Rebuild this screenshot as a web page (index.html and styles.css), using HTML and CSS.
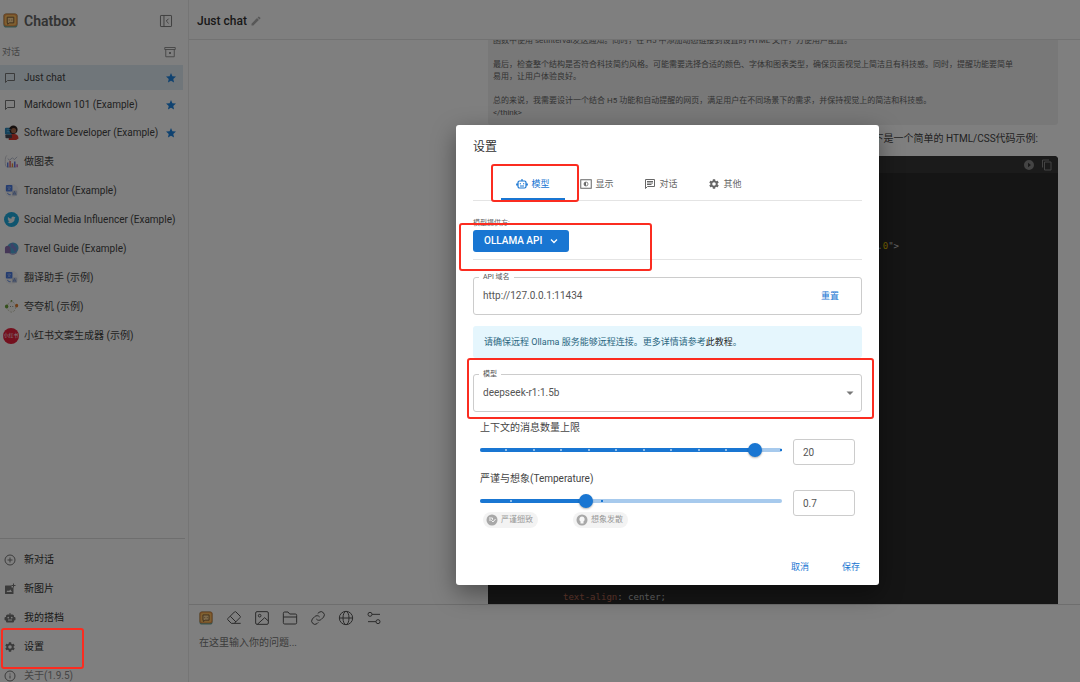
FILE: index.html
```html
<!DOCTYPE html>
<html lang="zh-CN">
<head>
<meta charset="utf-8">
<title>Chatbox</title>
<link rel="stylesheet" href="styles.css">
</head>
<body>
<svg class="defs" aria-hidden="true">
  <symbol id="logo" viewBox="0 0 16 16"><rect x=".5" y=".5" width="15" height="15" rx="3" fill="#6fa79c"/><rect x=".5" y=".5" width="15" height="13.500" rx="3" fill="#e0904a"/><rect x="2" y="2" width="12" height="11" rx="2" fill="#ffc060"/><path d="M4.500 4.500h7v6H7l-2 1.500v-1.500h-.5z" fill="#ffd898" stroke="#7a5a38" stroke-width="1"/><path d="M6.200 7.500h.8M9 7.500h.8" stroke="#7a5a38"/></symbol>
  <symbol id="bubble" viewBox="0 0 24 24"><path d="M3 3h18v14H7l-4 4z" fill="none" stroke="currentColor" stroke-width="2" stroke-linejoin="round"/></symbol>
  <symbol id="star" viewBox="0 0 24 24"><path d="M12 17.300 18.200 21l-1.640-7.030L22 9.240l-7.190-.61L12 2 9.190 8.630 2 9.240l5.460 4.730L5.820 21z" fill="currentColor"/></symbol>
  <symbol id="gear" viewBox="0 0 24 24"><path fill="currentColor" fill-rule="evenodd" d="M19.140 12.940c.04-.3.06-.61.06-.94s-.02-.64-.07-.94l2.030-1.580a.5.5 0 0 0 .12-.61l-1.920-3.320a.49.49 0 0 0-.59-.22l-2.390.96a7 7 0 0 0-1.620-.94l-.36-2.540a.48.48 0 0 0-.48-.41h-3.840a.47.47 0 0 0-.47.41l-.36 2.540c-.59.24-1.130.57-1.620.94l-2.390-.96a.47.47 0 0 0-.59.22L2.740 8.870a.47.47 0 0 0 .12.61l2.030 1.580a6 6 0 0 0-.02 1.880l-2.030 1.580a.5.5 0 0 0-.12.61l1.920 3.320c.12.22.37.29.59.22l2.390-.96c.5.38 1.030.7 1.620.94l.36 2.540c.05.24.24.41.48.41h3.840c.24 0 .44-.17.47-.41l.36-2.540a7 7 0 0 0 1.620-.94l2.390.96c.22.08.47 0 .59-.22l1.920-3.320a.47.47 0 0 0-.12-.61zM12 15.600a3.600 3.600 0 1 1 0-7.200 3.600 3.600 0 0 1 0 7.200z"/></symbol>
  <symbol id="translate" viewBox="0 0 16 16"><circle cx="8" cy="8" r="7.500" fill="#f4f4f6"/><rect x="2" y="2" width="7" height="7" rx="1" fill="#4a7ae0"/><path d="M3.500 4.500h4M5.500 3.500v1M4 7.500c1.500-.5 2.500-1.500 3-3M4.500 5.500c.5 1 1.500 1.800 2.500 2" stroke="#b8ccf8" stroke-width=".6" fill="none"/><rect x="8.500" y="8" width="5.500" height="5.500" rx="1" fill="#c4cce0"/><path d="m9.700 12.500 1.500-3.500 1.500 3.500M10.200 11.700h2" stroke="#6484c8" stroke-width=".8" fill="none"/><path d="M4 10.500c0 1.500 1 2 3 2" stroke="#4a7ae0" fill="none"/></symbol>
</svg>

<div class="app">
  <aside class="sidebar">
    <header class="brand">
      <svg class="i15"><use href="#logo"/></svg>
      <h1>Chatbox</h1>
      <button class="plain" aria-label="收起"><svg class="i14" viewBox="0 0 24 24" fill="none" stroke="currentColor" stroke-width="1.600"><rect x="2.500" y="2.500" width="19" height="19" rx="1"/><path d="M8.500 2.500v19M16.500 8l-4 4 4 4"/></svg></button>
    </header>
    <div class="section"><span>对话</span>
      <button class="plain" aria-label="清理"><svg class="i12" viewBox="0 0 24 24" fill="none" stroke="currentColor" stroke-width="1.800"><path d="M1.500 3h21v4h-21zM3.500 7v14.500h17V7M10 12l4 4m0-4-4 4"/></svg></button>
    </div>
    <nav class="chats">
      <a href="#" class="row active"><span class="ic"><svg class="i12"><use href="#bubble"/></svg></span><span class="name">Just chat</span><svg class="i12 star"><use href="#star"/></svg></a>
      <a href="#" class="row"><span class="ic"><svg class="i12"><use href="#bubble"/></svg></span><span class="name">Markdown 101 (Example)</span><svg class="i12 star"><use href="#star"/></svg></a>
      <a href="#" class="row tall"><span class="ic"><svg class="i15" viewBox="0 0 16 16"><rect x="1" y="3" width="9" height="7" rx="1" fill="#2f86b8"/><circle cx="10" cy="5" r="4.500" fill="#2d211e"/><circle cx="10.300" cy="6" r="2.700" fill="#a86a4c"/><path d="M5 16c0-5 2-6.500 5.500-6.500s5 2 5 5L13 16z" fill="#d9382c"/><rect x="1.500" y="10" width="7" height="4" rx="1" fill="#474b58"/><path d="M3 5h4M3 7h3" stroke="#5bb0dc"/></svg></span><span class="name">Software Developer (Example)</span><svg class="i12 star"><use href="#star"/></svg></a>
      <a href="#" class="row tall"><span class="ic"><svg class="i15" viewBox="0 0 16 16"><path d="M3 1.500C1.500 3 1.300 5 1.300 8s.2 5 1.700 6h10" fill="none" stroke="#c8c8d0"/><path d="m4 5 2 1.500L9 4l2 2 3-3" fill="none" stroke="#a0a8c0" stroke-width=".8"/><path d="M4 14V9" stroke="#5b7be0" stroke-width="1.500"/><path d="M6.500 14V7.500" stroke="#e05b6b" stroke-width="1.500"/><path d="M9 14v-4" stroke="#e08b3b" stroke-width="1.500"/><path d="M11.500 14V8" stroke="#5b6be0" stroke-width="1.500"/><path d="M14 14v-3" stroke="#c05bb0" stroke-width="1.500"/></svg></span><span class="name">做图表</span></a>
      <a href="#" class="row tall"><span class="ic"><svg class="i15"><use href="#translate"/></svg></span><span class="name">Translator (Example)</span></a>
      <a href="#" class="row tall"><span class="ic"><svg class="i15" viewBox="0 0 24 24"><circle cx="12" cy="12" r="12" fill="#1eaade"/><path fill="#f3f8fa" d="M18.500 8.500a5 5 0 0 1-1.500.4c.5-.3 1-.8 1.200-1.400-.5.3-1.100.5-1.700.6a2.700 2.700 0 0 0-4.600 2.500A7.600 7.600 0 0 1 6.400 7.800a2.700 2.700 0 0 0 .8 3.600c-.4 0-.9-.1-1.200-.3 0 1.300.9 2.400 2.100 2.700-.4.100-.8.1-1.200 0 .3 1.100 1.300 1.800 2.500 1.900A5.400 5.400 0 0 1 5.500 16.800a7.600 7.600 0 0 0 11.700-6.900c.5-.4 1-.9 1.300-1.400z"/></svg></span><span class="name">Social Media Influencer (Example)</span></a>
      <a href="#" class="row tall"><span class="ic"><svg class="i15" viewBox="0 0 16 16"><circle cx="9.500" cy="7.500" r="6" fill="#4fa9d6"/><path d="M8 2c3 1 2 3 4 4s2 4 0 6c-2-1-1-3-3-4S6 4 8 2z" fill="#7a86d0"/><path d="M1 13V8c0-2 1-3 3-3s3 2 3 4v4H2z" fill="#8a6faf"/><path d="M6 13c3 2 6 1 8-1" stroke="#7f78b8" fill="none"/></svg></span><span class="name">Travel Guide (Example)</span></a>
      <a href="#" class="row tall"><span class="ic"><svg class="i15"><use href="#translate"/></svg></span><span class="name">翻译助手 (示例)</span></a>
      <a href="#" class="row tall"><span class="ic"><svg class="i15" viewBox="0 0 16 16"><ellipse cx="8" cy="8.500" rx="4.500" ry="5.500" fill="#f8f8f4" stroke="#b5b5a0" stroke-width=".8" stroke-dasharray="2 1.500"/><ellipse cx="2.800" cy="8" rx="1.800" ry="2.200" fill="#6aa33a"/><ellipse cx="13.500" cy="7" rx="1.600" ry="2" fill="#e07a2c"/><circle cx="8" cy="2" r="1" fill="#7a9a4a"/><path d="M6.500 8h.8M9 8h.8" stroke="#666"/></svg></span><span class="name">夸夸机 (示例)</span></a>
      <a href="#" class="row tall"><span class="ic red">小红书</span><span class="name">小红书文案生成器 (示例)</span></a>
    </nav>
    <nav class="menu">
      <a href="#" class="row tall"><span class="ic"><svg class="i12" viewBox="0 0 24 24" fill="none" stroke="currentColor" stroke-width="2"><circle cx="12" cy="12" r="10"/><path d="M12 7v10M7 12h10"/></svg></span><span class="name">新对话</span></a>
      <a href="#" class="row tall"><span class="ic"><svg class="i12" viewBox="0 0 24 24" fill="currentColor"><path fill-rule="evenodd" d="M3 5h12v4h4v12a1 1 0 0 1-1 1H3a1 1 0 0 1-1-1V6a1 1 0 0 1 1-1zm2 13h11l-3.500-5-2.700 3.500L8 14.300z"/><path d="M18 1h2v3h3v2h-3v3h-2V6h-3V4h3z"/></svg></span><span class="name">新图片</span></a>
      <a href="#" class="row tall"><span class="ic"><svg class="i12" viewBox="0 0 24 24" fill="currentColor"><path fill-rule="evenodd" d="M11 2h2v3h4a3 3 0 0 1 3 3v2h1a2 2 0 0 1 2 2v3a2 2 0 0 1-2 2h-1v2a2 2 0 0 1-2 2H6a2 2 0 0 1-2-2v-2H3a2 2 0 0 1-2-2v-3a2 2 0 0 1 2-2h1V8a3 3 0 0 1 3-3h4zM8.500 9.500a1.700 1.700 0 1 0 0 3.400 1.700 1.700 0 0 0 0-3.400zm7 0a1.700 1.700 0 1 0 0 3.400 1.700 1.700 0 0 0 0-3.400zM8 15v2h8v-2z"/></svg></span><span class="name">我的搭档</span></a>
      <a href="#" class="row tall"><span class="ic"><svg class="i12"><use href="#gear"/></svg></span><span class="name">设置</span></a>
      <a href="#" class="row tall about"><span class="ic"><svg class="i12" viewBox="0 0 24 24" fill="none" stroke="currentColor" stroke-width="2"><circle cx="12" cy="12" r="10"/><path d="M12 11v6M12 7v2"/></svg></span><span class="name">关于(1.9.5)</span></a>
    </nav>
  </aside>

  <main class="chat">
    <header class="topbar"><h2>Just chat</h2><svg class="i12" viewBox="0 0 24 24" fill="currentColor"><path d="M3 17.250V21h3.750L17.800 9.940l-3.750-3.750zM20.700 7.040a1 1 0 0 0 0-1.410l-2.340-2.340a1 1 0 0 0-1.410 0l-1.830 1.830 3.750 3.750z"/></svg></header>
    <section class="messages">
      <div class="think">
        <p>函数中使用 setInterval发送通知。同时，在 H5 中添加动态链接到设置的 HTML 文件，方便用户配置。</p>
        <p>最后，检查整个结构是否符合科技简约风格。可能需要选择合适的颜色、字体和图表类型，确保页面视觉上简洁且有科技感。同时，提醒功能要简单<br>易用，让用户体验良好。</p>
        <p>总的来说，我需要设计一个结合 H5 功能和自动提醒的网页，满足用户在不同场景下的需求，并保持视觉上的简洁和科技感。<br>&lt;/think&gt;</p>
      </div>
      <p class="answer">下是一个简单的 HTML/CSS代码示例:</p>
      <div class="code">
        <div class="codebar">
          <svg class="i12" viewBox="0 0 24 24" fill="currentColor"><path fill-rule="evenodd" d="M12 2a10 10 0 1 0 0 20 10 10 0 0 0 0-20zm-2 14.500v-9l6 4.500z"/></svg>
          <svg class="i12" viewBox="0 0 24 24" fill="none" stroke="currentColor" stroke-width="2"><path d="M3 17V2h13M7 6h13v16H7z"/></svg>
        </div>
<pre>&lt;!DOCTYPE html&gt;




    &lt;meta name="viewport" content="width=device-width, initial-scale=1.<span class="val">0</span>"&gt;


























            <span class="prop">text-align</span>: center;
</pre>
      </div>
    </section>
    <footer class="composer">
      <div class="tools">
        <button class="plain" aria-label="Chatbox"><svg class="i14"><use href="#logo"/></svg></button>
        <button class="plain" aria-label="清空"><svg class="i16" viewBox="0 0 24 24"><path d="m8 20-5-5c-.8-.8-.8-1.600 0-2.400l9.600-9.600c.8-.8 1.600-.8 2.400 0l6 6c.8.8.8 1.600 0 2.400L12.500 20M8 20h14M6.500 9.500l8.500 8.500"/></svg></button>
        <button class="plain" aria-label="图片"><svg class="i16" viewBox="0 0 24 24"><rect x="2.500" y="2.500" width="19" height="19" rx="2"/><circle cx="8.500" cy="8.500" r="2"/><path d="m5 21.500 11-10 5.500 5"/></svg></button>
        <button class="plain" aria-label="文件"><svg class="i16" viewBox="0 0 24 24"><path d="M2 19V5a2 2 0 0 1 2-2h5l2.500 3H20a2 2 0 0 1 2 2v11a2 2 0 0 1-2 2H4a2 2 0 0 1-2-2zM2 10.500h20"/></svg></button>
        <button class="plain" aria-label="链接"><svg class="i16" viewBox="0 0 24 24"><path d="M9.500 13.500a5 5 0 0 0 7.500.5l3.500-3.500a5 5 0 0 0-7-7L11.500 5.500M14.500 10.500a5 5 0 0 0-7.500-.5l-3.500 3.500a5 5 0 0 0 7 7l2-2"/></svg></button>
        <button class="plain" aria-label="联网"><svg class="i16" viewBox="0 0 24 24"><circle cx="12" cy="12" r="10"/><ellipse cx="12" cy="12" rx="4.500" ry="10"/><path d="M2 12h20"/></svg></button>
        <button class="plain" aria-label="选项"><svg class="i16" viewBox="0 0 24 24"><circle cx="6" cy="6.500" r="3"/><path d="M9 6.500h12M3 17.500h12"/><circle cx="18" cy="17.500" r="3"/></svg></button>
      </div>
      <textarea aria-label="消息" placeholder="在这里输入你的问题..."></textarea>
    </footer>
  </main>
</div>

<div class="backdrop">
  <div class="dialog" role="dialog" aria-labelledby="dlg">
    <div class="body">
      <h2 id="dlg">设置</h2>
      <div class="tabs" role="tablist">
        <button role="tab" aria-selected="true" class="tab on"><svg class="i12" viewBox="0 0 24 24" fill="none" stroke="currentColor" stroke-width="2.400"><path d="M7 6h10a3 3 0 0 1 3 3v8a3 3 0 0 1-3 3H7a3 3 0 0 1-3-3V9a3 3 0 0 1 3-3zM12 6V2M1.500 11v4M22.500 11v4M8 16h8M7.500 11.500h2.500M14 11.500h2.500"/></svg>模型</button>
        <button role="tab" class="tab"><svg class="i12" viewBox="0 0 24 24" fill="none" stroke="currentColor" stroke-width="2"><rect x="1.500" y="3.500" width="21" height="17"/><circle cx="12" cy="12" r="4" stroke-width="1.500"/><path d="M12 8a4 4 0 0 0 0 8z" fill="currentColor" stroke="none"/></svg>显示</button>
        <button role="tab" class="tab"><svg class="i12" viewBox="0 0 24 24" fill="none" stroke="currentColor" stroke-width="2"><path d="M3 3h18v14H7l-4 4zM6 7h12M6 10h12M6 13h9"/></svg>对话</button>
        <button role="tab" class="tab"><svg class="i12"><use href="#gear"/></svg>其他</button>
      </div>
      <div class="provider">
        <span class="cap">模型提供方:</span>
        <button class="primary">OLLAMA API<svg class="i12" viewBox="0 0 24 24" fill="none" stroke="currentColor" stroke-width="2.500"><path d="m6 9 6 6 6-6"/></svg></button>
      </div>
      <div class="field host">
        <label for="host">API 域名</label>
        <input id="host" type="text" value="http://127.0.0.1:11434">
        <button class="link">重置</button>
      </div>
      <p class="alert">请确保远程 Ollama 服务能够远程连接。更多详情请参考<a href="#">此教程</a>。</p>
      <div class="field model">
        <label for="model">模型</label>
        <select id="model"><option>deepseek-r1:1.5b</option></select>
        <svg class="i12" viewBox="0 0 24 24" fill="currentColor"><path d="m5 9 7 7 7-7z"/></svg>
      </div>
      <div class="setting">
        <label for="ctx">上下文的消息数量上限</label>
        <div class="line">
          <div class="slider">
            <span class="fill" style="width:91%"></span>
            <span class="ticks"><i></i><i></i><i></i><i></i><i></i><i></i><i></i><i></i><i></i><i></i><i class="dark"></i></span>
            <input id="ctx" type="range" min="0" max="22" value="20">
          </div>
          <input class="num" type="text" aria-label="消息数量" value="20">
        </div>
      </div>
      <div class="setting">
        <label for="temp">严谨与想象(Temperature)</label>
        <div class="line">
          <div>
            <div class="slider">
              <span class="fill" style="width:35%"></span>
              <span class="mark" style="left:10%"></span><span class="mark dark" style="left:40%"></span>
              <input id="temp" type="range" min="0" max="2" step="0.1" value="0.7">
            </div>
            <div class="chips">
              <span class="chip"><svg class="i12" viewBox="0 0 24 24"><circle cx="12" cy="12" r="11" fill="#a8a8a8"/><path d="M6 8h7v3l-2 2 3 3 5-6M6 12h4" stroke="#f3f3f3" stroke-width="2" fill="none"/></svg>严谨细致</span>
              <span class="chip"><svg class="i12" viewBox="0 0 24 24"><circle cx="12" cy="12" r="11" fill="#a8a8a8"/><path d="M12 5a5.500 5.500 0 0 0-3 10v4h6v-4a5.500 5.500 0 0 0-3-10z" fill="#f6f6f6"/></svg>想象发散</span>
            </div>
          </div>
          <input class="num" type="text" aria-label="Temperature" value="0.7">
        </div>
      </div>
    </div>
    <div class="actions"><button class="link">取消</button><button class="link">保存</button></div>
    <span class="hl hl-tab"></span><span class="hl hl-provider"></span><span class="hl hl-model"></span>
  </div>
</div>
<span class="hl hl-settings"></span>
</body>
</html>
```
FILE: styles.css
```css
* { box-sizing: border-box; }
body {
  margin: 0;
  height: 100vh;
  overflow: hidden;
  position: relative;
  background: #fff;
  color: #444;
  font: 10px/14px Roboto, "Noto Sans CJK SC", sans-serif;
}
h1, h2, p, pre { margin: 0; }
a { color: inherit; text-decoration: none; }
button, input, select, textarea { font: inherit; color: inherit; }
svg { display: block; flex: none; }
.defs { display: none; }
.plain { border: 0; padding: 0; background: none; }
.i12 { width: 12px; height: 12px; }
.i14 { width: 14px; height: 14px; }
.i15 { width: 15px; height: 15px; }
.i16 { width: 16px; height: 16px; }

.app { display: grid; grid-template-columns: 189px 1fr; height: 100vh; }

/* The menu runs a few pixels past the bottom edge of the window. */
.sidebar {
  display: flex;
  flex-direction: column;
  height: calc(100vh + 8px);
  border-right: 1px solid #ebebeb;
}
.brand { display: flex; align-items: center; gap: 6px; height: 41px; padding: 0 15px 0 3px; }
.brand h1 { flex: 1; font-size: 14px; font-weight: 600; color: #666; }
.brand .plain { color: #777; }
.section { display: flex; justify-content: space-between; align-items: center; height: 23px; padding: 0 12px 2px 2px; font-size: 9px; color: #888; }
.chats { flex: 1; }
.row { display: flex; align-items: center; gap: 5px; height: 27px; padding: 0 6px 0 3px; margin-right: 5px; white-space: nowrap; color: #444; }
.row.tall { height: 29px; }
.row.active { height: 25px; margin: 1px 5px 1px 0; background: #e1ecf5; }
.row .name { flex: 1; }
.ic { display: grid; place-items: center; width: 16px; height: 16px; color: #777; }
.menu .ic, .row:not(.tall) .ic { width: 14px; margin-right: 2px; }
.star { color: #1f85e0; }
.ic.red { border-radius: 50%; background: #e8203c; color: #fff; font-size: 5px; line-height: 15px; }
.menu { margin-right: 3px; padding-top: 6px; border-top: 1px solid #dcdcdc; }
.menu .row { color: #333; }
.menu .about { color: #8a8a8a; }

.chat { display: grid; grid-template-rows: 40px 1fr 78px; height: 100vh; min-width: 0; }
.topbar { display: flex; align-items: center; gap: 3px; padding: 2px 8px 0; border-bottom: 1px solid #e4e4e4; }
.topbar h2 { font-size: 12px; font-weight: 500; color: #333; }
.topbar svg { color: #b0b0b0; }
.messages { overflow: hidden; min-height: 0; padding: 0 22px 0 299px; }
.think { margin-top: -10px; padding: 5px 5px 6px; border-radius: 3px; background: #f1f1f1; color: #666; font-size: 8px; line-height: 12px; white-space: nowrap; }
.think p + p { margin-top: 12px; }
.answer { padding: 7px 20px 10px 0; text-align: right; color: #444; }
.code { border-radius: 4px 4px 0 0; overflow: hidden; background: #2b2b2b; color: #aaa; }
.codebar { display: flex; justify-content: flex-end; align-items: center; gap: 6px; height: 17px; padding: 0 5px; background: #363636; color: #888; }
.code pre { padding: 2px 10px; font: 9px/13px "DejaVu Sans Mono", monospace; color: #c8c8c8; }
.val { color: #e0c000; }
.prop { color: #c0705a; }

.composer { padding: 5px 10px; border-top: 1px solid #dcdcdc; }
.tools { display: flex; gap: 12px; color: #555; }
.tools button { display: grid; place-items: center; width: 16px; height: 16px; margin-left: -1px; margin-right: 1px; }
.tools .i16 { fill: none; stroke: currentColor; stroke-width: 1.500; }
.composer textarea { display: block; width: 100%; margin-top: 10px; padding: 0; border: 0; outline: 0; resize: none; background: none; }
.composer textarea::placeholder { color: #777; }

.backdrop { position: absolute; inset: 0; display: grid; place-items: center; padding: 27px 0 0 255px; background: rgba(0, 0, 0, 0.5); }
.dialog { position: relative; width: 423px; max-width: 100%; border-radius: 3px; background: #fff; color: #555; box-shadow: 0 8px 24px rgba(0, 0, 0, 0.4); }
.body { padding: 15px 17px 0; }
.body h2 { font-size: 12px; font-weight: 400; color: #333; }
.tabs { display: flex; margin-top: 13px; padding-left: 28px; border-bottom: 1px solid #e4e4e4; }
.tab { display: flex; align-items: center; justify-content: center; gap: 3px; width: 64px; height: 33px; padding: 3px 0 0; border: 0; border-bottom: 2px solid transparent; background: none; color: #666; font-size: 9px; }
.tab.on { color: #1976d2; border-color: #1976d2; }
.provider { padding: 17px 0 7px; border-bottom: 1px solid #e4e4e4; }
.cap { display: block; font-size: 7px; line-height: 10px; color: #666; }
.primary { display: flex; align-items: center; gap: 6px; height: 22px; margin-top: 2px; padding: 0 9px 0 11px; border: 0; border-radius: 3px; background: #1976d2; color: #fff; font-weight: 500; }
.field { position: relative; display: flex; align-items: center; height: 38px; border: 1px solid #ccc; border-radius: 3px; padding: 0 6px 0 9px; }
.field label { position: absolute; top: -6px; left: 5px; padding: 0 4px; background: #fff; font-size: 7px; line-height: 10px; color: #555; }
.field input, .field select { flex: 1; min-width: 0; padding: 0; border: 0; outline: 0; background: none; appearance: none; }
.host { margin-top: 17px; padding-right: 22px; }
.link { padding: 0; border: 0; background: none; color: #1976d2; font-size: 9px; }
.alert { margin: 11px 0 16px; padding: 9px 11px; border-radius: 3px; background: #e5f6fd; color: #2a6680; font-size: 9px; }
.alert a { color: #222; }
.model { padding-right: 5px; }
.model svg { color: #777; }
.setting { padding: 0 7px; margin-top: 7px; }
.model + .setting { margin-top: 9px; }
.setting label { display: block; margin-bottom: 4px; color: #444; }
.line { display: grid; grid-template-columns: 1fr 62px; gap: 11px; align-items: start; }
.slider { position: relative; height: 22px; }
.slider::before, .fill { content: ""; position: absolute; left: 0; top: 9px; height: 4px; border-radius: 2px; }
.slider::before { width: 100%; background: #a7caed; }
.fill { background: #1976d2; }
.ticks { position: absolute; inset: 10px 0 auto; display: flex; }
.ticks i { flex: 1; height: 2px; border-right: 2px solid #8fbce8; }
.ticks i.dark { border-color: #1976d2; }
.mark { position: absolute; top: 10px; width: 2px; height: 2px; background: #8fbce8; }
.mark.dark { background: #1976d2; }
.slider input { position: absolute; top: 0; left: -7px; width: calc(100% + 14px); height: 22px; margin: 0; appearance: none; background: none; }
.slider input::-webkit-slider-thumb { appearance: none; width: 14px; height: 14px; border-radius: 50%; background: #1976d2; box-shadow: 0 1px 2px rgba(0, 0, 0, 0.3); }
.num { width: 100%; height: 26px; padding: 1px 9px 0; border: 1px solid #ccc; border-radius: 3px; }
.chips { display: flex; gap: 35px; padding-left: 3px; }
.chip { display: flex; align-items: center; gap: 3px; height: 16px; padding: 0 5px 0 3px; border-radius: 8px; background: #f3f3f3; color: #999; font-size: 8px; }
.actions { display: flex; justify-content: flex-end; gap: 13px; padding: 28px 9px 7px; }
.actions .link { width: 38px; height: 22px; padding-top: 1px; }

.hl { position: absolute; border: 2px solid #fb2c20; border-radius: 3px; pointer-events: none; }
.hl-tab { left: 35px; top: 39px; width: 88px; height: 38px; }
.hl-provider { left: 3px; top: 98px; width: 193px; height: 48px; }
.hl-model { left: 11px; top: 233px; width: 407px; height: 61px; }
.hl-settings { left: 1px; bottom: 13px; width: 83px; height: 41px; }
```
